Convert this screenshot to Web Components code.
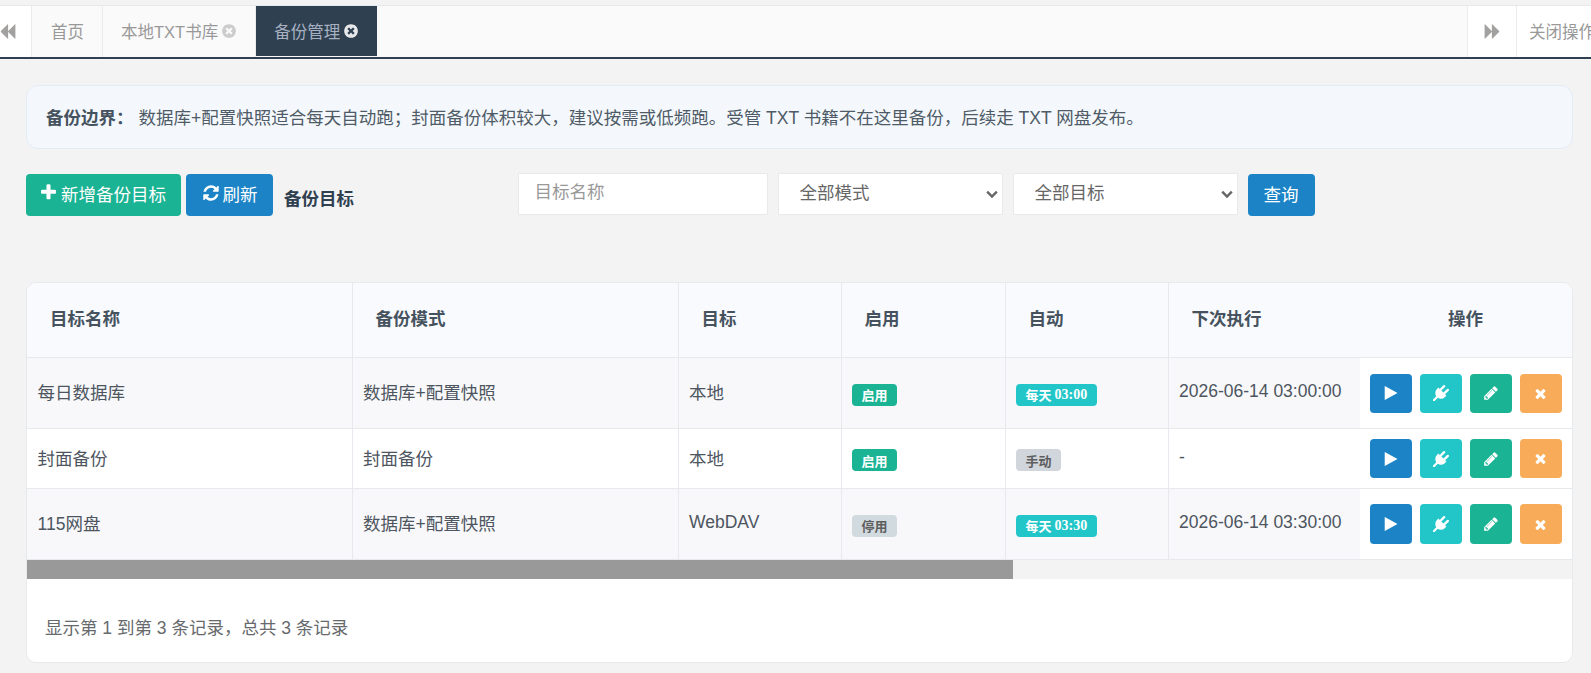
<!DOCTYPE html>
<html lang="zh-CN">
<head>
<meta charset="utf-8">
<title>备份管理</title>
<style>
html,body{margin:0;padding:0;background:#f3f3f4;overflow:hidden;height:100%}
body{font-family:"Liberation Sans","Noto Sans CJK SC",sans-serif;color:#4b5563}
</style>
</head>
<body>
<backup-page></backup-page>
<script>
const FONT='"Liberation Sans","Noto Sans CJK SC",sans-serif';
const ICONS={
plus:'M1600 736v192q0 40-28 68t-68 28h-416v416q0 40-28 68t-68 28h-192q-40 0-68-28t-28-68v-416h-416q-40 0-68-28t-28-68v-192q0-40 28-68t68-28h416v-416q0-40 28-68t68-28h192q40 0 68 28t28 68v416h416q40 0 68 28t28 68z',
refresh:'M1639 1056q0 5-1 7-64 268-268 434.5t-478 166.5q-146 0-282.5-55t-243.5-157l-129 129q-19 19-45 19t-45-19-19-45v-448q0-26 19-45t45-19h448q26 0 45 19t19 45-19 45l-137 137q71 66 161 102t187 36q134 0 250-65t186-179q11-17 53-117 8-23 30-23h192q13 0 22.5 9.5t9.5 22.5zm25-800v448q0 26-19 45t-45 19h-448q-26 0-45-19t-19-45 19-45l138-138q-148-137-349-137-134 0-250 65t-186 179q-11 17-53 117-8 23-30 23h-199q-13 0-22.5-9.5t-9.5-22.5v-7q65-268 270-434.5t480-166.5q146 0 284 55.5t245 156.5l130-129q19-19 45-19t45 19 19 45z',
play:'M1576 927l-1328 738q-23 13-39.5 3t-16.5-36v-1472q0-26 16.5-36t39.5 3l1328 738q23 13 23 31t-23 31z',
pencil:'M491 1536l91-91-235-235-91 91v107h128v128h107zm523-928q0-22-22-22-10 0-17 7l-542 542q-7 7-7 17 0 22 22 22 10 0 17-7l542-542q7-7 7-17zm-54-192l416 416-832 832h-416v-416zm683 96q0 53-37 90l-166 166-416-416 166-165q36-38 90-38 53 0 91 38l235 234q37 39 37 91z',
times:'M1490 1322q0 40-28 68l-136 136q-28 28-68 28t-68-28l-294-294-294 294q-28 28-68 28t-68-28l-136-136q-28-28-28-68t28-68l294-294-294-294q-28-28-28-68t28-68l136-136q28-28 68-28t68 28l294 294 294-294q28-28 68-28t68 28l136 136q28 28 28 68t-28 68l-294 294 294 294q28 28 28 68z',
'times-circle':'M1277 1122q0-26-19-45l-181-181 181-181q19-19 19-45 0-27-19-46l-90-90q-19-19-46-19-26 0-45 19l-181 181-181-181q-19-19-45-19-27 0-46 19l-90 90q-19 19-19 46 0 26 19 45l181 181-181 181q-19 19-19 45 0 27 19 46l90 90q19 19 46 19 26 0 45-19l181-181 181 181q19 19 45 19 27 0 46-19l90-90q19-19 19-46zm387-226q0 209-103 385.5t-279.5 279.5-385.5 103-385.5-103-279.5-279.5-103-385.5 103-385.5 279.5-279.5 385.5-103 385.5 103 279.5 279.5 103 385.5z',
plug:'M1755 453q37 38 37 90.5t-37 90.5l-401 400 150 150-160 160q-163 163-389.5 186.5t-411.5-100.5l-362 362h-181v-181l362-362q-124-185-100.5-411.5t186.5-389.5l160-160 150 150 400-401q38-37 91-37t90 37 37 90.5-37 90.5l-400 401 234 234 401-400q38-37 91-37t90 37z',
backward:'M1683 141q19-19 32-13t13 32v1472q0 26-13 32t-32-13l-710-710q-9-9-13-19v710q0 26-13 32t-32-13l-710-710q-19-19-19-45t19-45l710-710q19-19 32-13t13 32v710q4-10 13-19z',
forward:'M109 1651q-19 19-32 13t-13-32v-1472q0-26 13-32t32 13l710 710q9 9 13 19v-710q0-26 13-32t32 13l710 710q19 19 19 45t-19 45l-710 710q-19 19-32 13t-13-32v-710q-4 10-13 19z'
};
class Base extends HTMLElement{
  constructor(){super();this.attachShadow({mode:'open'});}
  connectedCallback(){if(!this._done){this._done=true;this.shadowRoot.innerHTML=this.render();}}
}
class FaIcon extends Base{
  render(){const s=this.getAttribute('size')||16;
    return `<style>:host{display:inline-flex;width:${s}px;height:${s}px;flex:none}svg{width:100%;height:100%;display:block;fill:currentColor}</style>
    <svg viewBox="0 0 1792 1792" aria-hidden="true"><path d="${ICONS[this.getAttribute('name')]}"/></svg>`;}
}
class TabItem extends Base{
  render(){return `<style>
  :host{display:flex;align-items:center;gap:3px;height:100%;box-sizing:border-box;padding:0 18px 2px 18px;font-size:16.5px;color:#999;border-right:1px solid #ececec;white-space:nowrap}
  :host([home]){padding-left:19px}
  :host([active]){background:#2f4050;color:#a7b1c2;border-right:0;height:50px;gap:3px;padding:0 18px 1px 18px}
  :host([active]) fa-icon{color:#e6e8ea}
  fa-icon{color:#ccc}
  </style><slot></slot>${this.hasAttribute('closable')?'<fa-icon name="times-circle" size="16"></fa-icon>':''}`;}
}
class TabBar extends Base{
  render(){return `<style>
  :host{display:flex;height:54px;box-sizing:border-box;margin-top:5px;border-top:1px solid #e7eaec;border-bottom:2px solid #2f4050;background:#fafafa;overflow:hidden;color:#999;font-size:16.5px}
  .l{flex:0 0 32px;background:#fff;border-right:1px solid #ececec;box-sizing:border-box;display:flex;align-items:center;color:#a3a1a0}
  .l fa-icon{margin-left:-1px}
  .tabs{flex:1;display:flex;min-width:0}
  .r{flex:0 0 50px;background:#fff;border-left:1px solid #ececec;border-right:1px solid #ececec;box-sizing:border-box;display:flex;align-items:center;justify-content:center;color:#a3a1a0}
  .c{flex:0 0 74px;background:#fff;box-sizing:border-box;padding:0 0 2px 12px;display:flex;align-items:center;white-space:nowrap;overflow:hidden;color:#999}
  </style>
  <div class="l"><fa-icon name="backward" size="17"></fa-icon></div>
  <div class="tabs"><slot></slot></div>
  <div class="r"><fa-icon name="forward" size="17"></fa-icon></div>
  <div class="c">关闭操作</div>`;}
}
class NoticeBox extends Base{
  render(){return `<style>
  :host{display:flex;align-items:center;height:64px;box-sizing:border-box;margin:26px 18.5px 0 26px;padding:0 0 2px 19px;background:#f4f8fd;border:1px solid #e3ebf4;border-radius:12px;font-size:17.5px;color:#4f5b66;white-space:nowrap}
  b{color:#46535f;margin-right:5px}
  </style><b><slot name="label"></slot></b><span><slot></slot></span>`;}
}
class XBtn extends Base{
  render(){const k=this.getAttribute('kind')||'blue';
    const c={blue:'#1c84c6',cyan:'#23c6c8',green:'#1ab394',orange:'#f8ac59'}[k];
    return `<style>
    :host{display:inline-flex;align-items:center;justify-content:center;gap:3px;box-sizing:border-box;background:${c};color:#fff;border-radius:4px;font-size:17.5px;height:42px;white-space:nowrap;flex:none}
    </style><slot></slot>`;}
}
class XBadge extends Base{
  render(){const k=this.getAttribute('kind');
    const s={green:['#1ab394','#fff'],cyan:['#23c6c8','#fff'],gray:['#d1dade','#5e5e5e'],slate:['#d1d6dd','#5e5e5e']}[k];
    return `<style>
    :host{display:inline-flex;align-items:center;gap:3px;height:22px;box-sizing:border-box;padding:0 9.5px;margin-top:3px;border-radius:4px;background:${s[0]};color:${s[1]};font:bold 13px "Liberation Serif","Noto Sans CJK SC",serif;white-space:nowrap}
    </style><slot></slot>`;}
}
class XSelect extends Base{
  render(){const w=this.getAttribute('width')||225;
    return `<style>
    :host{display:block;position:relative;width:${w}px;height:42px;flex:none}
    select{appearance:none;-webkit-appearance:none;display:block;box-sizing:border-box;width:100%;height:100%;background:#fff;border:1px solid #e9e9eb;border-radius:1px;font:17.5px ${FONT};color:#666;outline:0;margin:0;padding:0 20px 2px 21px}
    svg{position:absolute;right:5px;top:17px;width:12px;height:9px;pointer-events:none}
    </style>
    <select><option>${this.getAttribute('label')}</option></select>
    <svg viewBox="0 0 12 9"><path d="M1.2 1.6 6 6.6l4.8-5" fill="none" stroke="#666" stroke-width="2.4"/></svg>`;}
}
class FilterBar extends Base{
  render(){return `<style>
  :host{display:flex;align-items:flex-start;margin:24px 0 0 26px;height:44px;font-family:${FONT}}
  x-btn{margin-top:1px;padding-bottom:4px}
  .b1{width:155px;padding-right:2px}.b2{width:87px;margin-left:5px}
  .title{flex:0 0 233.5px;margin-left:11px;padding-top:12px;font-weight:bold;font-size:17.5px;color:#2f4050}
  input{box-sizing:border-box;height:42px;width:250px;padding:0 16px 3px;background:#fff;border:1px solid #e9e9eb;border-radius:1px;font:17.5px ${FONT};color:#555;outline:0;margin:0}
  input::placeholder{color:#999;opacity:1}
  x-select{margin-left:10px}
  .q{width:67px;margin-left:10px}
  .b1 fa-icon,.b2 fa-icon{margin-top:-1px}
  </style>
  <x-btn class="b1" kind="green"><fa-icon name="plus" size="19"></fa-icon>新增备份目标</x-btn>
  <x-btn class="b2"><fa-icon name="refresh" size="18"></fa-icon>刷新</x-btn>
  <div class="title">备份目标</div>
  <input placeholder="目标名称">
  <x-select label="全部模式"></x-select>
  <x-select label="全部目标"></x-select>
  <x-btn class="q">查询</x-btn>`;}
}
class ActionBtns extends Base{
  render(){return `<style>
  :host{display:flex;gap:8px;align-items:center}
  x-btn{width:42px;height:var(--h,39px);padding:0}
  </style>
  <x-btn><fa-icon name="play" size="16"></fa-icon></x-btn>
  <x-btn kind="cyan"><fa-icon name="plug" size="16"></fa-icon></x-btn>
  <x-btn kind="green"><fa-icon name="pencil" size="16"></fa-icon></x-btn>
  <x-btn kind="orange"><fa-icon name="times" size="15"></fa-icon></x-btn>`;}
}
class TableRow extends Base{
  render(){return `<style>
  :host{display:grid;grid-template-columns:var(--cols);background:var(--bg,#fff);border-bottom:1px solid #e7eaec;box-sizing:border-box;font-size:17.5px;color:#4d5560;height:var(--rh)}
  </style><slot></slot>`;}
}
class TableCell extends Base{
  render(){return `<style>
  :host{display:flex;align-items:center;box-sizing:border-box;padding:0 10.5px 3px;border-right:1px solid #e7e9ee;white-space:nowrap;min-width:0}
  :host([head]){padding:0 23px 5px;font-weight:bold;color:#46535f;font-size:17.5px}
  :host([badge]){padding-bottom:0}
  :host([last]){border-right:0;background:#fff;padding:0 10px;justify-content:flex-start}
  :host([last][head]){background:transparent;justify-content:center;padding:0 0 5px 0}
  :host([time]){border-right:0}
  </style><slot></slot>`;}
}
class DataTable extends Base{
  render(){
    const rows=[
      ['每日数据库','数据库+配置快照','本地',['green','启用'],['cyan','每天<span class="n">03:00</span>'],'2026-06-14 03:00:00','71px','#f8f8fa','39px'],
      ['封面备份','封面备份','本地',['green','启用'],['slate','手动'],'-','60px','#fff','39px'],
      ['115网盘','数据库+配置快照','WebDAV',['gray','停用'],['cyan','每天<span class="n">03:30</span>'],'2026-06-14 03:30:00','71px','#f8f8fa','40px'],
    ];
    const body=rows.map(r=>`<table-row style="--rh:${r[6]};--bg:${r[7]}">
      <table-cell>${r[0]}</table-cell><table-cell>${r[1]}</table-cell><table-cell>${r[2]}</table-cell>
      <table-cell badge><x-badge kind="${r[3][0]}">${r[3][1]}</x-badge></table-cell>
      <table-cell badge><x-badge kind="${r[4][0]}">${r[4][1]}</x-badge></table-cell>
      <table-cell time>${r[5]}</table-cell>
      <table-cell last><action-btns style="--h:${r[8]}"></action-btns></table-cell>
    </table-row>`).join('');
    return `<style>
    :host{display:block;box-sizing:border-box;margin:65px 18.5px 0 26px;height:381px;background:#fff;border:1px solid #e7eaec;border-radius:10px;overflow:hidden;
      --cols:325.5px 326px 163px 164px 163px 191px 1fr}
    .n{font-size:14px}
    .sb{height:19px;background:#f3f3f4;display:flex}
    .thumb{width:985.5px;background:#999}
    .foot{padding:39px 0 0 18px;font-size:17.5px;color:#676a6c;line-height:20px}
    </style>
    <table-row style="--rh:75px;--bg:#f9fafd">
      <table-cell head>目标名称</table-cell><table-cell head>备份模式</table-cell><table-cell head>目标</table-cell>
      <table-cell head>启用</table-cell><table-cell head>自动</table-cell><table-cell head time>下次执行</table-cell>
      <table-cell head last>操作</table-cell>
    </table-row>
    ${body}
    <div class="sb"><div class="thumb"></div></div>
    <div class="foot">显示第 1 到第 3 条记录\uFF0C总共 3 条记录</div>`;
  }
}
class BackupPage extends Base{
  render(){return `<style>:host{display:block;font-family:${FONT}}</style>
  <tab-bar>
    <tab-item home>首页</tab-item>
    <tab-item closable>本地TXT书库</tab-item>
    <tab-item closable active>备份管理</tab-item>
  </tab-bar>
  <notice-box><span slot="label">备份边界\uFF1A</span>数据库+配置快照适合每天自动跑\uFF1B封面备份体积较大\uFF0C建议按需或低频跑。受管 TXT 书籍不在这里备份\uFF0C后续走 TXT 网盘发布。</notice-box>
  <filter-bar></filter-bar>
  <data-table></data-table>`;}
}
const defs={'fa-icon':FaIcon,'tab-item':TabItem,'tab-bar':TabBar,'notice-box':NoticeBox,'x-btn':XBtn,'x-badge':XBadge,'x-select':XSelect,'filter-bar':FilterBar,'action-btns':ActionBtns,'table-row':TableRow,'table-cell':TableCell,'data-table':DataTable,'backup-page':BackupPage};
for(const k in defs)customElements.define(k,defs[k]);
</script>
</body>
</html>
